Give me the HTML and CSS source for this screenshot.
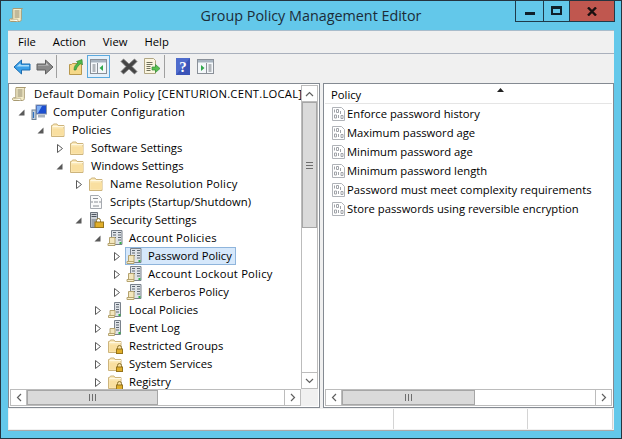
FILE: index.html
```html
<!DOCTYPE html>
<html>
<head>
    <title>Group Policy Management Editor</title>
    <link rel="stylesheet" href="styles.css">
</head>
<body>
    <!-- icons used more than once -->
    <svg class="defs" width="0" height="0">
        <symbol id="i-scroll" viewBox="0 0 16 16">
            <path d="M4 1.500h9.500c-1 .6-1.200 1.500-1.200 2.500v8.500c0 1.200-.8 2-2 2H2c-1 0-1.500-.7-1.500-1.500 0-.7.5-1.200 1.500-1.200h1.800V3c0-.8.100-1.500.2-1.500z" fill="#f6eecb" stroke="#a89a72"/>
            <path d="M5.500 4h5M5.500 6h5M5.500 8h5M5.500 10h5" stroke="#8c8468"/>
            <path d="M2 12.200h6.500c.5.600.5 1.600 0 2.300" fill="#fff" stroke="#c0b48c"/>
        </symbol>
        <symbol id="i-computer" viewBox="0 0 16 16">
            <rect x="5" y="1" width="10.500" height="9" fill="#1c4fd0" stroke="#8b97a8"/>
            <path d="M6 2h5l-4 7H6z" fill="#7fb0f5"/>
            <path d="M7 11h7v2.500H7z" fill="#a9b3bd"/>
            <rect x="1" y="6" width="4" height="9.500" fill="#c6d2de" stroke="#6f8296"/>
            <path d="M2.500 8v6" stroke="#2c6fc0" stroke-width="1.200"/>
        </symbol>
        <symbol id="i-folder" viewBox="0 0 16 16">
            <path d="M1.500 3.500h1l1-1.500h3.500l1 1.500h6v11h-12.500z" fill="#fbe9b8" stroke="#cdb47c"/>
            <path d="M2.500 6.500h11.500v7h-11.500z" fill="#f9dfa0"/>
            <path d="M2.500 4.500h11.500" stroke="#fff8e2"/>
        </symbol>
        <symbol id="i-lock" viewBox="0 0 16 16">
            <path d="M10.500 11V9.500a2 2 0 0 1 4 0V11" fill="none" stroke="#8c7430"/>
            <rect x="9.500" y="11" width="6" height="4.500" fill="#e0ae2a" stroke="#96741c"/>
        </symbol>
        <symbol id="i-folder-lock" viewBox="0 0 16 16">
            <use href="#i-folder"/>
            <use href="#i-lock"/>
        </symbol>
        <symbol id="i-script" viewBox="0 0 16 16">
            <path d="M2.500 1.500h8l3 3v10h-11z" fill="#fafafa" stroke="#a6aab0"/>
            <path d="M5 4.500h5M4.500 7l-1 1 1 1M11.500 7l1 1-1 1M6 8h4M5 12h6" stroke="#8a8e94" fill="none"/>
        </symbol>
        <symbol id="i-server-lock" viewBox="0 0 16 16">
            <path d="M2.500.5h7v15h-7z" fill="#cfd3d8" stroke="#6c737c"/>
            <path d="M3.500 2.500h5M3.500 4.500h5" stroke="#4e5660"/>
            <path d="M3.500 7h5v8h-5z" fill="#9aa1a9"/>
            <path d="M8.500 10V8.500a2 2 0 0 1 4 0V10" fill="#fff" stroke="#8c7430"/>
            <rect x="7" y="10" width="8.500" height="5.500" fill="#e0ae2a" stroke="#96741c"/>
        </symbol>
        <symbol id="i-server-doc" viewBox="0 0 16 16">
            <path d="M4.500.5h10.500v14h-10.500z" fill="#dfe3e8" stroke="#7a828c"/>
            <path d="M6 2.500h3M11 2.500h3M6 5h3M11 5h3M6 7.500h3M11 7.500h3M11 10h3" stroke="#5d6670"/>
            <path d="M2.500 7.500h5.500v6H2.500z" fill="#f3e6bd" stroke="#b5a36f"/>
            <path d="M1 13.500h7v2H1z" fill="#f8efce" stroke="#b5a36f"/>
            <rect x="12.500" y="12" width="2" height="2" fill="#36b24a"/>
        </symbol>
        <symbol id="i-log" viewBox="0 0 16 16">
            <path d="M7.500.5h6v14h-6z" fill="#dfe3e8" stroke="#7a828c"/>
            <path d="M9 2.500h3M9 5h3M9 7.500h3M9 10h3" stroke="#5d6670"/>
            <path d="M3 8.500h5v5H3z" fill="#f3e6bd" stroke="#b5a36f"/>
            <path d="M1.500 13.500h6v2h-6z" fill="#f8efce" stroke="#b5a36f"/>
            <rect x="11.500" y="12" width="2" height="2" fill="#36b24a"/>
        </symbol>
        <symbol id="i-item" viewBox="0 0 16 16">
            <path d="M1.500 1.500h9l3 3v10h-12z" fill="#fff" stroke="#b0b3b8"/>
            <path d="M3.500 3.500v3M5.500 3.500h2v3h-2zM9.500 5v3M3.500 9h2v3h-2zM7.500 9v3M10 9.500h2v3h-2z" fill="none" stroke="#a0a3a8"/>
        </symbol>
        <symbol id="a-open" viewBox="0 0 11 11">
            <path d="M8.500 2.500v6h-6z" fill="#595959"/>
        </symbol>
        <symbol id="a-closed" viewBox="0 0 11 11">
            <path d="M3.500 1.500l5 4-5 4z" fill="#fff" stroke="#5a5a5a"/>
        </symbol>
        <symbol id="c-up" viewBox="0 0 9 6"><path d="M1 5l3.500-3.500L8 5" fill="none" stroke="#606060" stroke-width="1.200"/></symbol>
        <symbol id="c-down" viewBox="0 0 9 6"><path d="M1 1l3.500 3.500L8 1" fill="none" stroke="#606060" stroke-width="1.200"/></symbol>
        <symbol id="c-left" viewBox="0 0 6 9"><path d="M5 1L1.500 4.500 5 8" fill="none" stroke="#606060" stroke-width="1.200"/></symbol>
        <symbol id="c-right" viewBox="0 0 6 9"><path d="M1 1l3.500 3.500L1 8" fill="none" stroke="#606060" stroke-width="1.200"/></symbol>
    </svg>

    <div class="janela">
        <div class="titulo">
            <svg class="titulo-icone" width="16" height="16"><use href="#i-scroll"/></svg>
            <div class="titulo-texto">Group Policy Management Editor</div>
            <div class="controles">
                <div class="controle minimizar"><span class="traco"></span></div>
                <div class="controle maximizar"><span class="quadro"></span></div>
                <div class="controle fechar">
                    <svg width="10" height="9" viewBox="0 0 10 9"><path d="M1 .5l8 8M9 .5l-8 8" stroke="#1a1010" stroke-width="2.400"/></svg>
                </div>
            </div>
        </div>

        <div class="cliente">
            <div class="menu">
                <span>File</span>
                <span>Action</span>
                <span>View</span>
                <span>Help</span>
            </div>

            <div class="ferramentas">
                <div class="tool">
                    <svg width="18" height="16" viewBox="0 0 18 16"><path d="M8.500 1L1 8l7.500 7v-4H17V5H8.500z" fill="#3aa0e8" stroke="#1c6cb0"/><path d="M7 4.500L3.500 7.500H16V6H8z" fill="#a8dcfa"/></svg>
                </div>
                <div class="tool">
                    <svg width="18" height="16" viewBox="0 0 18 16"><path d="M9.500 1L17 8l-7.500 7v-4H1V5h8.500z" fill="#8a8a8a" stroke="#606060"/><path d="M2 6h8V3.500L13 6.500H2z" fill="#c4c4c4"/></svg>
                </div>
                <div class="sep"></div>
                <div class="tool grupo">
                    <svg width="16" height="18" viewBox="0 0 16 18"><path d="M1.500 6.500h2l1-1h9v11h-12z" fill="#f5d888" stroke="#b8984c"/><path d="M6 12c0-4 2-6 4-7L8.500 3.500 14 1.500l.5 5.500-1.500-1.500C11 7 8.500 9 8 12z" fill="#4cb848" stroke="#2c8030" stroke-width=".6"/></svg>
                </div>
                <div class="tool ativo">
                    <svg width="17" height="15" viewBox="0 0 17 15"><rect x=".5" y=".5" width="16" height="14" fill="#f4f7fa" stroke="#8a9098"/><path d="M1 1h15v2.500H1z" fill="#a8b4c0"/><path d="M2.500 6h3M2.500 8h3M2.500 10h3M2.500 12h3" stroke="#70767c"/><path d="M7.500 4v10" stroke="#8a9098"/><path d="M13 6v6l-3.500-3z" fill="#30a84c"/></svg>
                </div>
                <div class="tool grupo">
                    <svg width="18" height="17" viewBox="0 0 18 17"><path d="M1 3.500L3.500 1 9 6l5.500-5L17 3.500 12 8.500l5 5-2.500 2.500L9 11l-5.500 5L1 13.500l5-5z" fill="#454545" stroke="#7c7c7c" stroke-width=".8"/></svg>
                </div>
                <div class="tool">
                    <svg width="17" height="17" viewBox="0 0 17 17"><path d="M1.500.5h9l2 2v13h-11z" fill="#fbf6e0" stroke="#b0a684"/><path d="M3.500 4.500h6M3.500 6.500h6M3.500 8.500h4M3.500 10.500h4M3.500 12.500h4" stroke="#70705c"/><path d="M9 9h3.500V6.500L17 10.500l-4.500 4V12H9z" fill="#58c050" stroke="#348c38" stroke-width=".7"/></svg>
                </div>
                <div class="sep sep-2"></div>
                <div class="tool grupo">
                    <svg width="14" height="17" viewBox="0 0 14 17"><rect width="14" height="17" fill="#3b54b8"/><path d="M0 0h14L0 17z" fill="#4f6ccc"/><text x="7" y="13.500" class="ajuda">?</text></svg>
                </div>
                <div class="tool">
                    <svg width="17" height="15" viewBox="0 0 17 15"><rect x=".5" y=".5" width="16" height="14" fill="#f4f7fa" stroke="#8a9098"/><path d="M1 1h15v2.500H1z" fill="#a8b4c0"/><path d="M11.500 6h3M11.500 8h3M11.500 10h3M11.500 12h3" stroke="#70767c"/><path d="M9.500 4v10" stroke="#8a9098"/><path d="M4 6v6l3.500-3z" fill="#30a84c"/></svg>
                </div>
            </div>

            <div class="paineis">
                <div class="painel esquerda">
                    <div class="arvore">
                        <div class="linha raiz"><span class="no"><svg class="ic"><use href="#i-scroll"/></svg>Default Domain Policy [CENTURION.CENT.LOCAL]</span></div>
                        <div class="linha n1 largo"><svg class="seta"><use href="#a-open"/></svg><span class="no"><svg class="ic"><use href="#i-computer"/></svg>Computer Configuration</span></div>
                        <div class="linha n2"><svg class="seta"><use href="#a-open"/></svg><span class="no"><svg class="ic"><use href="#i-folder"/></svg>Policies</span></div>
                        <div class="linha n3"><svg class="seta"><use href="#a-closed"/></svg><span class="no"><svg class="ic"><use href="#i-folder"/></svg>Software Settings</span></div>
                        <div class="linha n3"><svg class="seta"><use href="#a-open"/></svg><span class="no"><svg class="ic"><use href="#i-folder"/></svg>Windows Settings</span></div>
                        <div class="linha n4 largo"><svg class="seta"><use href="#a-closed"/></svg><span class="no"><svg class="ic"><use href="#i-folder"/></svg>Name Resolution Policy</span></div>
                        <div class="linha n4"><span class="seta"></span><span class="no"><svg class="ic"><use href="#i-script"/></svg>Scripts (Startup/Shutdown)</span></div>
                        <div class="linha n4"><svg class="seta"><use href="#a-open"/></svg><span class="no"><svg class="ic"><use href="#i-server-lock"/></svg>Security Settings</span></div>
                        <div class="linha n5 largo"><svg class="seta"><use href="#a-open"/></svg><span class="no"><svg class="ic"><use href="#i-server-doc"/></svg>Account Policies</span></div>
                        <div class="linha n6"><svg class="seta"><use href="#a-closed"/></svg><span class="no selecionado"><svg class="ic"><use href="#i-server-doc"/></svg>Password Policy</span></div>
                        <div class="linha n6 largo"><svg class="seta"><use href="#a-closed"/></svg><span class="no"><svg class="ic"><use href="#i-server-doc"/></svg>Account Lockout Policy</span></div>
                        <div class="linha n6"><svg class="seta"><use href="#a-closed"/></svg><span class="no"><svg class="ic"><use href="#i-server-doc"/></svg>Kerberos Policy</span></div>
                        <div class="linha n5"><svg class="seta"><use href="#a-closed"/></svg><span class="no"><svg class="ic"><use href="#i-log"/></svg>Local Policies</span></div>
                        <div class="linha n5"><svg class="seta"><use href="#a-closed"/></svg><span class="no"><svg class="ic"><use href="#i-log"/></svg>Event Log</span></div>
                        <div class="linha n5"><svg class="seta"><use href="#a-closed"/></svg><span class="no"><svg class="ic"><use href="#i-folder-lock"/></svg>Restricted Groups</span></div>
                        <div class="linha n5"><svg class="seta"><use href="#a-closed"/></svg><span class="no"><svg class="ic"><use href="#i-folder-lock"/></svg>System Services</span></div>
                        <div class="linha n5"><svg class="seta"><use href="#a-closed"/></svg><span class="no"><svg class="ic"><use href="#i-folder-lock"/></svg>Registry</span></div>
                    </div>
                    <div class="vbarra">
                        <div class="sb-botao"><svg width="9" height="6"><use href="#c-up"/></svg></div>
                        <div class="sb-polegar v-polegar"><span class="grip-h"></span></div>
                        <div class="sb-resto"></div>
                        <div class="sb-botao"><svg width="9" height="6"><use href="#c-down"/></svg></div>
                    </div>
                    <div class="hbarra">
                        <div class="sb-botao"><svg width="6" height="9"><use href="#c-left"/></svg></div>
                        <div class="sb-polegar h-polegar-1"><span class="grip-v"></span></div>
                        <div class="sb-resto"></div>
                        <div class="sb-botao"><svg width="6" height="9"><use href="#c-right"/></svg></div>
                    </div>
                    <div class="canto"></div>
                </div>

                <div class="painel direita">
                    <div class="cabecalho">
                        <span>Policy</span>
                        <svg class="ordem" width="7" height="4" viewBox="0 0 7 4"><path d="M3.500 0L7 4H0z" fill="#222"/></svg>
                    </div>
                    <div class="lista">
                        <div class="item"><svg class="ic"><use href="#i-item"/></svg>Enforce password history</div>
                        <div class="item"><svg class="ic"><use href="#i-item"/></svg>Maximum password age</div>
                        <div class="item"><svg class="ic"><use href="#i-item"/></svg>Minimum password age</div>
                        <div class="item"><svg class="ic"><use href="#i-item"/></svg>Minimum password length</div>
                        <div class="item"><svg class="ic"><use href="#i-item"/></svg>Password must meet complexity requirements</div>
                        <div class="item"><svg class="ic"><use href="#i-item"/></svg>Store passwords using reversible encryption</div>
                    </div>
                    <div class="hbarra">
                        <div class="sb-botao"><svg width="6" height="9"><use href="#c-left"/></svg></div>
                        <div class="sb-polegar h-polegar-2"><span class="grip-v"></span></div>
                        <div class="sb-resto"></div>
                        <div class="sb-botao"><svg width="6" height="9"><use href="#c-right"/></svg></div>
                    </div>
                </div>
            </div>

            <div class="status">
                <div class="st st-1"></div>
                <div class="st st-2"></div>
                <div class="st st-3"></div>
            </div>
        </div>
    </div>
</body>
</html>
```

FILE: styles.css
```css
*{
    box-sizing: border-box;
}
html, body{
    margin: 0;
    width: 622px;
    height: 439px;
    overflow: hidden;
}
body{
    font-family: "Open Sans", "Noto Sans", sans-serif;
    font-size: 11.25px;
    color: #000;
}
.defs{
    display: block;
    height: 0;
}
.janela{
    width: 622px;
    height: 439px;
    background-color: #63c8ea;
    border: 1px solid #25343f;
    padding: 0 7px 7px;
    display: flex;
    flex-direction: column;
}

/* barra de titulo */
.titulo{
    height: 29px;
    flex: none;
    display: grid;
    grid-template-columns: 1fr auto 1fr;
}
.titulo-icone{
    margin: 6px 0 0 1px;
}
.titulo-texto{
    font-size: 14.35px;
    line-height: 29px;
    color: #1c2c38;
}
.controles{
    justify-self: end;
    display: flex;
    height: 21px;
    margin-right: -1px;
    border: 1px solid #1f3a4a;
    border-top: 0;
}
.controle{
    display: flex;
    align-items: center;
    justify-content: center;
    border-left: 1px solid #1f3a4a;
}
.minimizar{
    width: 27px;
    border-left: 0;
}
.maximizar{
    width: 26px;
}
.fechar{
    width: 45px;
    background-color: #c0574f;
}
.traco{
    width: 10px;
    height: 3px;
    margin-top: 5px;
    background-color: #10202a;
}
.quadro{
    width: 11px;
    height: 9px;
    margin-top: -2px;
    border: 2px solid #10202a;
    border-top-width: 3px;
}

/* area cliente */
.cliente{
    height: 401px;
    flex: none;
    background-color: #f0f0f0;
    border-top: 1px solid #a9bccb;
    display: flex;
    flex-direction: column;
}
.menu{
    height: 23px;
    flex: none;
    display: flex;
    align-items: center;
    padding: 0 0 1px 10px;
    gap: 17px;
    border-bottom: 1px solid #a9b0bc;
}
.ferramentas{
    height: 29px;
    flex: none;
    display: flex;
    align-items: flex-start;
    padding: 1px 0 0 2px;
}
.tool{
    width: 23px;
    height: 23px;
    display: flex;
    align-items: center;
    justify-content: center;
}
.ativo{
    background-color: #e4f0fa;
    border: 1px solid #5ba9de;
}
.grupo{
    margin-left: 7px;
}
.sep{
    width: 1px;
    height: 23px;
    background-color: #a0a0a0;
}
.sep-2{
    margin-left: 1px;
}
.sep-2 + .grupo{
    margin-left: 6px;
}
.ajuda{
    font-family: "Liberation Serif", serif;
    font-size: 15px;
    font-weight: bold;
    fill: #fff;
    text-anchor: middle;
}

/* paineis */
.paineis{
    height: 325px;
    flex: none;
    display: flex;
    gap: 3px;
}
.painel{
    border: 1px solid #848a92;
    padding: 1px;
    background-color: #fff;
    display: grid;
    min-width: 0;
}
.esquerda{
    width: 312px;
    grid-template-columns: 291px 17px;
    grid-template-rows: 304px 17px;
}
.direita{
    width: 291px;
    grid-template-rows: 19px 285px 17px;
}
.arvore{
    overflow: hidden;
    white-space: nowrap;
}
.linha{
    height: 18px;
    display: flex;
    align-items: center;
    padding-left: 2px;
}
.n1{ padding-left: 2px; }
.n2{ padding-left: 21px; }
.n3{ padding-left: 40px; }
.n4{ padding-left: 59px; }
.n5{ padding-left: 78px; }
.n6{ padding-left: 97px; }
.raiz{
    letter-spacing: .23px;
}
.largo{
    letter-spacing: .2px;
}
.seta{
    width: 11px;
    height: 11px;
    margin: 1px 4px 0 4px;
    flex: none;
}
.no{
    height: 18px;
    display: inline-flex;
    align-items: center;
    gap: 6px;
    padding-right: 3px;
    padding-bottom: 1px;
    border: 1px solid transparent;
    margin-left: -1px;
}
.linha > .no:first-child{
    margin-left: 0;
    border-left: 0;
}
.selecionado{
    background-color: #d6e8fb;
    border-color: #8fb5dc;
}
.ic{
    width: 16px;
    height: 16px;
    flex: none;
}
.no .ic{
    margin-top: 1px;
}

/* barras de rolagem */
.vbarra, .hbarra{
    display: flex;
    background-color: #fff;
}
.vbarra{
    flex-direction: column;
    border-left: 1px solid #bcbcbc;
    border-right: 1px solid #bcbcbc;
}
.hbarra{
    border-top: 1px solid #bcbcbc;
    border-bottom: 1px solid #bcbcbc;
}
.direita .hbarra{
    grid-row: 3;
}
.sb-botao{
    width: 17px;
    height: 17px;
    flex: none;
    display: flex;
    align-items: center;
    justify-content: center;
    border: 1px solid #bcbcbc;
    background-color: #fff;
}
.vbarra .sb-botao{
    width: 15px;
    border-left: 0;
    border-right: 0;
}
.hbarra .sb-botao{
    height: 15px;
    border-top: 0;
    border-bottom: 0;
}
.sb-polegar{
    flex: none;
    display: flex;
    align-items: center;
    justify-content: center;
    background-color: #dadada;
    border: 1px solid #a6a6a6;
}
.v-polegar{
    height: 126px;
}
.h-polegar-1{
    width: 131px;
}
.h-polegar-2{
    width: 133px;
}
.sb-resto{
    flex: 1;
}
.grip-h{
    width: 7px;
    height: 7px;
    border-top: 1px solid #6e6e6e;
    border-bottom: 1px solid #6e6e6e;
    background: linear-gradient(#6e6e6e, #6e6e6e) center / 100% 1px no-repeat;
}
.grip-v{
    width: 7px;
    height: 7px;
    border-left: 1px solid #6e6e6e;
    border-right: 1px solid #6e6e6e;
    background: linear-gradient(#6e6e6e, #6e6e6e) center / 1px 100% no-repeat;
}
.canto{
    background-color: #f0f0f0;
}

/* lista da direita */
.cabecalho{
    position: relative;
    height: 19px;
    padding-left: 6px;
    line-height: 19px;
    border-bottom: 1px solid #e5e5e5;
}
.ordem{
    position: absolute;
    left: 172px;
    top: 3px;
}
.lista{
    overflow: hidden;
    padding-left: 6px;
}
.item{
    height: 19px;
    display: flex;
    align-items: center;
    white-space: nowrap;
}

/* barra de status */
.status{
    height: 23px;
    flex: none;
    padding: 1px 0 1px 1px;
    display: flex;
    border-bottom: 1px solid #a9a9a9;
}
.st{
    background-color: #fff;
    border-right: 1px solid #d4d4d4;
}
.st-1{
    width: 385px;
}
.st-2{
    width: 134px;
}
.st-3{
    width: 85px;
}
```
